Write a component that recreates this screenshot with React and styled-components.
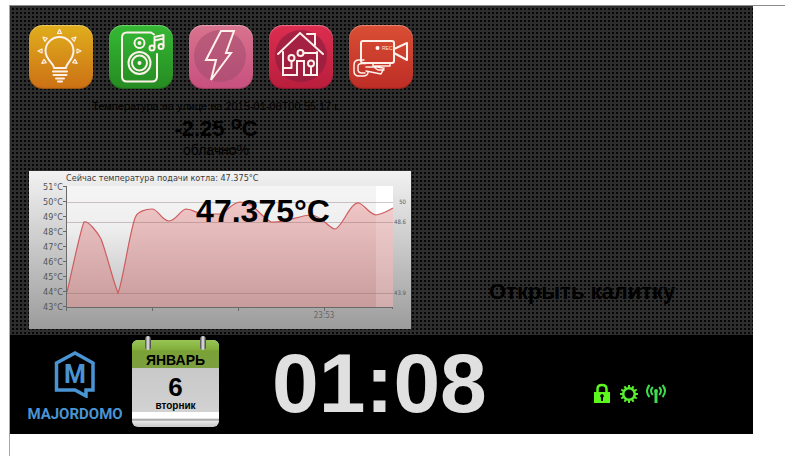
import React from "react";
import styled, { createGlobalStyle } from "styled-components";

const Global = createGlobalStyle`
  * { box-sizing: border-box; }
  html, body, #root { height: 100%; }
  body { margin: 0; background: #fff; font-family: "Liberation Sans", Arial, sans-serif; color: #000; }
  button { border: 0; padding: 0; background: none; font: inherit; color: inherit; cursor: pointer; }
  a { color: inherit; text-decoration: none; }
`;

const Page = styled.div`
  min-height: 100%;
  padding: 5px 0 0 9px;
  display: flex;
`;
const Frame = styled.div`
  flex: 1;
  border-top: 1px solid #8c8c8c;
  border-left: 1px solid #a8a8a8;
  padding-right: 32px;
`;
const Scene = styled.main`
  display: grid;
  grid-template-columns: 384px 1fr;
  column-gap: 76px;
  padding: 19px 16px 6px 19px;
  background:
    linear-gradient(#2d2d2d 50%, transparent 50%) 0 0 / 4px 4px,
    linear-gradient(90deg, #2d2d2d 50%, #060606 50%) 0 0 / 4px 4px;
`;
const Column = styled.div`
  display: flex;
  flex-direction: column;
`;
const Menu = styled.nav`
  display: flex;
  justify-content: space-between;
`;
const Tile = styled.a`
  display: grid;
  place-items: center;
  width: 64px;
  height: 64px;
  border-radius: 14px;
  background: linear-gradient(${(p) => p.$from}, ${(p) => p.$to});
  box-shadow: inset 0 1px 1px #ffffff55, inset 0 -1px 1px #00000044;
`;
const Glyph = styled.svg`
  display: block;
  width: 64px;
  height: 64px;
  fill: none;
  stroke: #fff0ea;
  stroke-width: 2;
  stroke-linejoin: round;
  stroke-linecap: round;
`;
const Weather = styled.section`
  width: 374px;
  padding-top: 10px;
  height: 82px;
  text-align: center;
`;
const Caption = styled.p`
  margin: 0;
  font-size: ${(p) => p.$size}px;
  line-height: ${(p) => p.$line}px;
`;
const Outdoor = styled.p`
  margin: 4px 0 0;
  font-size: 22px;
  line-height: 24px;
  font-weight: bold;
  sup { font-size: 18px; line-height: 0; vertical-align: 7px; }
`;
const ChartBox = styled.section`
  display: grid;
  width: 382px;
  > * { grid-area: 1 / 1; }
`;
const Chart = styled.svg`
  display: block;
  width: 100%;
  font-family: "DejaVu Sans Condensed", "DejaVu Sans", sans-serif;
`;
const Reading = styled.strong`
  justify-self: center;
  padding: 22px 0 0 86px;
  font-size: 32px;
  line-height: 37px;
`;
const GateColumn = styled(Column)`
  justify-content: flex-end;
  align-items: flex-start;
  padding-bottom: 24px;
`;
const Gate = styled.button`
  font-size: 22px;
  line-height: 26px;
  font-weight: bold;
  white-space: nowrap;
`;
const Footer = styled.footer`
  display: flex;
  align-items: flex-start;
  height: 99px;
  padding: 0 85px 0 19px;
  background: #000;
`;
const Brand = styled.a`
  width: 92px;
  padding-top: 15px;
  display: flex;
  flex-direction: column;
  align-items: center;
  color: #4a94d4;
  font-family: Roboto, sans-serif;
  font-weight: bold;
`;
const BrandName = styled.span`
  margin-top: 6px;
  font-size: 15px;
  line-height: 20px;
`;
const Calendar = styled.section`
  position: relative;
  width: 87px;
  height: 87px;
  margin: 5px 0 0 11px;
  border-radius: 6px;
  text-align: center;
  font-weight: bold;
  background: linear-gradient(#fff 0 78px, #8d8d8d 80px, #e8e8e8 81px, #ccc 86px);
`;
const Ring = styled.i`
  position: absolute;
  top: -4px;
  ${(p) => p.$side}: 13px;
  width: 6px;
  height: 14px;
  border-radius: 3px;
  background: linear-gradient(90deg, #444, #eee 50%, #333);
`;
const Month = styled.div`
  height: 28px;
  padding-top: 13px;
  border-radius: 6px 6px 0 0;
  background: linear-gradient(#98c455, #84b03d 9px, #7aa136 11px, #7c9f40);
  font-size: 14px;
  line-height: 15px;
`;
const DayBox = styled.div`
  height: 44px;
  padding-top: 6px;
  background: linear-gradient(#c8c8c8, #d2d2d2);
`;
const Day = styled.div`
  font-size: 26px;
  line-height: 27px;
`;
const Weekday = styled.div`
  font-size: 10px;
  line-height: 10px;
`;
const Clock = styled.time`
  margin-left: 53px;
  font-size: 84px;
  line-height: 97px;
  font-weight: bold;
  color: #e0e0e0;
`;
const Status = styled.div`
  display: flex;
  gap: 5px;
  margin: 48px 0 0 auto;
`;
const StatusButton = styled.button`
  display: block;
  width: 22px;
  height: 22px;
  svg { display: block; }
`;

const spin = (n) => Array.from({ length: n }, (_, i) => (i * 360) / n);

function Bulb() {
  return (
    <Glyph viewBox="0 0 64 64">
      <path d="M25 43c0-5-8.500-8-8.500-17a14 14 0 0 1 28 0c0 9-7.500 12-7.500 17z" />
      <path d="M24 46.500h14M24.500 50h13M27 53.500h8M29 56.500h4" />
      <g strokeWidth="1.2">
        {[-125, -90, -50, 0, 50, 90, 125].map((a) => (
          <path key={a} transform={`rotate(${a} 30.500 26)`} d="M30.500 4.500l2 4h-4z" />
        ))}
      </g>
    </Glyph>
  );
}
function Speaker() {
  return (
    <Glyph viewBox="0 0 64 64">
      <path d="M45 9.500L42 7.500H18q-5 0-5 5v39q0 5 5 5h25q5 0 5-5V29" />
      <circle cx="30.500" cy="18" r="5" /><circle cx="30.500" cy="18" r="1" />
      <circle cx="30.500" cy="38" r="11" /><circle cx="30.500" cy="38" r="7.500" /><circle cx="30.500" cy="38" r="1" />
      <path d="M45.500 22V12l9-2v11M45.500 15.500l9-2" />
      <circle cx="43" cy="23" r="2.500" /><circle cx="52" cy="21.500" r="2.500" />
    </Glyph>
  );
}
function Bolt() {
  return (
    <Glyph viewBox="0 0 64 64">
      <circle cx="31" cy="31" r="26" fill="#a34c6d" fillOpacity=".55" stroke="none" />
      <path strokeLinejoin="miter" d="M32 6h13l-8 22h5L22 55l5-20H17z" />
    </Glyph>
  );
}
function House() {
  return (
    <Glyph viewBox="0 0 64 64">
      <circle cx="32" cy="31" r="26" fill="#861d3d" fillOpacity=".6" stroke="none" />
      <path strokeLinejoin="miter" d="M9 29L31 8l23 21M38 9h8v11M14 27v23h14V36h7v14h13V27" />
      <circle cx="22.500" cy="33" r="3" /><circle cx="31.500" cy="28" r="3" /><circle cx="42" cy="38.500" r="3" />
      <path d="M22.500 36v7H15M34.500 28H47M42 41.500V50" />
    </Glyph>
  );
}
function Camera() {
  return (
    <Glyph viewBox="0 0 64 64">
      <rect x="12" y="16" width="33" height="22" rx="2" />
      <path d="M45 24l13-6v17l-13-7" />
      <path strokeWidth="1.5" d="M24 38v3h17v-3M17 42h11l6 1M17 46l15 3 3-6M26 43l3 2h6" />
      <path strokeWidth="1.5" d="M15 35H10q-5 0-5 5v6q0 5 5 5h4q5 0 5-4M17 38.500h-4q-4 0-4 3v3q0 3.500 4 3.500h3" />
      <circle cx="28.500" cy="23" r="2" fill="#fff" stroke="none" />
      <text x="33" y="25" fontSize="5" fill="#ffe0d8" stroke="none" fontFamily="Liberation Sans">REC</text>
    </Glyph>
  );
}

const tiles = [
  ["Свет", "#e0ae1c", "#cc7015", Bulb],
  ["Музыка", "#35b934", "#258b22", Speaker],
  ["Энергия", "#d8738e", "#c8507f", Bolt],
  ["Дом", "#dc2d50", "#b91e3c", House],
  ["Камеры", "#da4e34", "#bd2d26", Camera],
];

const curve =
  "M38 121C42 105 51 60 55 51C59 49 69 62 72 68C77 80 84 110 89 122C94 110 100 64 106 47C108 40 118 38 123 38C129 38 133 50 140 50C147 50 151 39 157 38C165 38 167 43 174 43H191C197 42 203 31 211 31C226 31 227 42 242 51C252 53 272 44 282 44C294 45 299 57 306 58C313 57 321 31 330 32C337 35 340 43 347 44C352 43 359 40 364 37";

function TemperatureChart() {
  return (
    <Chart viewBox="0 0 382 158" role="img" aria-label="Температура подачи котла">
      <defs>
        <linearGradient id="plate" x1="0" x2="0" y1="0" y2="1">
          <stop offset="0" stopColor="#f2f2f2" /><stop offset="1" stopColor="#9c9c9c" />
        </linearGradient>
        <linearGradient id="plot" x1="0" x2="0" y1="0" y2="1">
          <stop offset="0" stopColor="#f5f5f5" /><stop offset=".35" stopColor="#eee" /><stop offset="1" stopColor="#bcbcbc" />
        </linearGradient>
        <linearGradient id="area" gradientUnits="userSpaceOnUse" x1="0" x2="0" y1="30" y2="136">
          <stop offset="0" stopColor="#f0c6c6" /><stop offset="1" stopColor="#c99c9c" />
        </linearGradient>
      </defs>
      <path fill="url(#plate)" d="M0 0h382v158H0z" />
      <path fill="url(#plot)" d="M38 15h326v121H38z" />
      <path fill="#fff" d="M347 15h17v121h-17z" />
      <path fill="url(#area)" d={`${curve}V136H38z`} />
      <path fill="#fff" fillOpacity=".18" d="M347 44L364 37V136H347z" />
      <path stroke="#806060" strokeOpacity=".35" d="M38 31.500h326M38 51.500h326M38 122.500h326" />
      <path fill="none" stroke="#cf5c60" strokeWidth="1.2" d={curve} />
      <path stroke="#696969" fill="none" d="M37.500 15V140M38 136.500H364M123.500 136v4M209.500 136v4M295.500 136v4M363.500 136v2" />
      <g fontSize="9" fill="#555" textAnchor="end">
        {[51, 50, 49, 48, 47, 46, 45, 44, 43].map((t, i) => (
          <g key={t}>
            <text x="34" y={19 + i * 15}>{t}°C</text>
            <path stroke="#696969" d={`M34 ${15.5 + i * 15}h4`} />
          </g>
        ))}
      </g>
      <text x="37" y="10" fontSize="9" fill="#3c3c3c">Сейчас температура подачи котла: 47.375°C</text>
      <text x="295" y="147" fontSize="8" fill="#666" textAnchor="middle">23:53</text>
      <g fontSize="6" fill="#5c5c5c" textAnchor="end">
        <text x="377" y="33">50</text><text x="377" y="53">48.6</text><text x="377" y="124">43.9</text>
      </g>
    </Chart>
  );
}

export default function App() {
  return (
    <Page>
      <Global />
      <Frame>
        <Scene>
          <Column>
            <Menu>
              {tiles.map(([name, from, to, Icon]) => (
                <Tile key={name} href="#" aria-label={name} $from={from} $to={to}><Icon /></Tile>
              ))}
            </Menu>
            <Weather>
              <Caption $size={11} $line={14}>Температура на улице на 2015-01-06T00:55:17 г.</Caption>
              <Outdoor>-2.25 <sup>o</sup>C</Outdoor>
              <Caption $size={14} $line={18}>облачно%</Caption>
            </Weather>
            <ChartBox>
              <TemperatureChart />
              <Reading>47.375°C</Reading>
            </ChartBox>
          </Column>
          <GateColumn>
            <Gate type="button">Открыть калитку</Gate>
          </GateColumn>
        </Scene>
        <Footer>
          <Brand href="#" aria-label="MajorDoMo">
            <svg width="42" height="48" viewBox="0 0 42 48">
              <path fill="none" stroke="currentColor" strokeWidth="3.5" d="M21 3L2.500 13v27H21l11 6v-6h7V13z" />
              <text x="21" y="33" textAnchor="middle" fontSize="25" fill="currentColor">M</text>
            </svg>
            <BrandName>MAJORDOMO</BrandName>
          </Brand>
          <Calendar>
            <Ring $side="left" /><Ring $side="right" />
            <Month>ЯНВАРЬ</Month>
            <DayBox>
              <Day>6</Day>
              <Weekday>вторник</Weekday>
            </DayBox>
          </Calendar>
          <Clock>01:08</Clock>
          <Status>
            <StatusButton type="button" aria-label="Охрана">
              <svg width="22" height="22" viewBox="0 0 22 22">
                <path fill="none" stroke="#5cf81c" strokeWidth="2.5" d="M5.500 10V6q0-4 4.500-4t4.500 4v4" />
                <path fill="#5cf81c" fillRule="evenodd" d="M2 9h16v11H2zM10 11a2 2 0 0 0-1 3.600V18h2v-3.400A2 2 0 0 0 10 11z" />
              </svg>
            </StatusButton>
            <StatusButton type="button" aria-label="Настройки">
              <svg width="22" height="22" viewBox="0 0 22 22" fill="none" stroke="#58ee30">
                <circle cx="10" cy="11" r="5.8" strokeWidth="2.6" />
                {spin(12).map((a) => <path key={a} strokeWidth="2" transform={`rotate(${a} 10 11)`} d="M10 2v3" />)}
              </svg>
            </StatusButton>
            <StatusButton type="button" aria-label="Связь">
              <svg width="22" height="22" viewBox="0 0 22 22" fill="none" stroke="#3fdc50" strokeWidth="2">
                <path d="M3.500 2q-5 6 0 12M16.500 2q5 6 0 12M6.800 4q-3.500 4 0 8M13.200 4q3.500 4 0 8" />
                <circle cx="10" cy="8" r="2" fill="#3fdc50" stroke="none" />
                <path strokeWidth="3" d="M10 9v11" />
              </svg>
            </StatusButton>
          </Status>
        </Footer>
      </Frame>
    </Page>
  );
}
